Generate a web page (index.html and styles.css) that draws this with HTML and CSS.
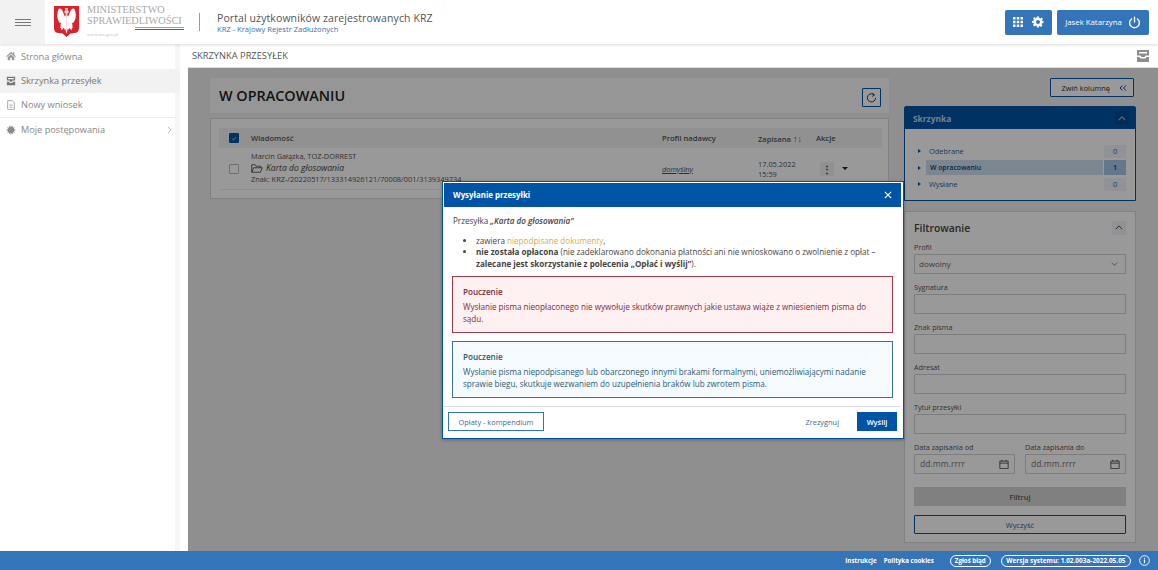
FILE: index.html
```html
<!DOCTYPE html>
<html lang="pl">
<head>
<meta charset="utf-8">
<title>Portal użytkowników zarejestrowanych KRZ</title>
<link rel="stylesheet" href="styles.css">
</head>
<body>
<div class="app">
  <header class="topbar">
    <button class="burger" aria-label="Menu"><span></span><span></span><span></span></button>
    <div class="logo">
      <svg class="shield" viewBox="0 0 28 32" width="27" height="31">
        <path d="M1 0h26v23c0 3-2 5-5 5l-4 .5L14 32l-4-3.500L6 28c-3 0-5-2-5-5z" fill="#d8232a"/>
        <path d="M14 4l1.500.5 1 2-1.500.6-.3 2.400 1 1.400 1.200-3 1.500-3.500 2-2 1.500.5 1.200 2.500.6 4-.4 3.500-1.500 3.500-2.500 2 1.500 1.500-1.200.5 1.200 2-1.500.3.5 2-2-1-1-1.200-.8 2-1-.8-.2 2.500-1 2z" fill="#fff"/>
        <path d="M14 4l-1.500.5-1 2 1.500.6.300 2.400-1 1.400-1.200-3-1.500-3.500-2-2-1.500.5-1.200 2.500-.6 4 .4 3.500 1.500 3.500 2.500 2-1.500 1.500 1.200.5-1.200 2 1.500.3-.5 2 2-1 1-1.200.8 2 1-.8.2 2.500 1 2z" fill="#fff"/>
        <path d="M12.500 2h3v1.800h-3z" fill="#f4d9a0"/>
      </svg>
      <div class="logo-text">
        <div class="logo-line">MINISTERSTWO</div>
        <div class="logo-line">SPRAWIEDLIWOŚCI</div>
        <div class="logo-rule"></div>
        <div class="logo-url">www.ms.gov.pl</div>
      </div>
    </div>
    <div class="brand-sep"></div>
    <div class="brand">
      <div class="brand-title">Portal użytkowników zarejestrowanych KRZ</div>
      <div class="brand-sub">KRZ - Krajowy Rejestr Zadłużonych</div>
    </div>
    <div class="top-actions">
      <div class="top-btn top-btn-icons">
        <svg viewBox="0 0 12 12" width="10" height="10" fill="#fff"><path d="M0 0h3v3H0zM4.500 0h3v3h-3zM9 0h3v3H9zM0 4.500h3v3H0zM4.500 4.500h3v3h-3zM9 4.500h3v3H9zM0 9h3v3H0zM4.500 9h3v3h-3zM9 9h3v3H9z"/></svg>
        <svg viewBox="0 0 24 24" width="12" height="12" fill="#fff"><path fill-rule="evenodd" d="M10 1h4l.6 3.100 1.900.8 2.700-1.800 2.800 2.800-1.800 2.700.8 1.900L23 10v4l-3.100.6-.8 1.900 1.800 2.700-2.800 2.800-2.700-1.800-1.900.8L14 23h-4l-.6-3.100-1.900-.8-2.700 1.800-2.800-2.800 1.800-2.700-.8-1.900L0 14v-4l3.100-.6.8-1.900L2.100 4.800l2.800-2.800 2.700 1.800 1.900-.8zM12 8a4 4 0 1 0 0 8 4 4 0 0 0 0-8z"/></svg>
      </div>
      <div class="top-btn top-btn-user">
        <span>Jasek Katarzyna</span>
        <svg viewBox="0 0 24 24" width="13" height="13" fill="none" stroke="#fff" stroke-width="2.600" stroke-linecap="round"><path d="M12 2v9M6.500 5.500a9 9 0 1 0 11 0"/></svg>
      </div>
    </div>
  </header>

  <div class="shell">
    <aside class="sidebar">
      <nav class="nav">
        <a class="nav-item">
          <svg viewBox="0 0 12 12" width="10" height="10" fill="#9a9a9a"><path d="M6 1 0 6.500l1 .8L6 3l5 4.300 1-.8L10 4.600V1.500H8.500v1.800zM2 7.500V11h3V8h2v3h3V7.500L6 4z"/></svg>
          <span>Strona główna</span>
        </a>
        <a class="nav-item nav-active">
          <svg viewBox="0 0 12 12" width="10" height="10" fill="#777"><path d="M1 1h10v4.500H8L7 7H5L4 5.500H1zM2.500 2.500v1.500h7V2.500zM1 7h2.500l1 1.500h3L8.500 7H11v4H1z"/></svg>
          <span>Skrzynka przesyłek</span>
        </a>
        <a class="nav-item nav-line">
          <svg viewBox="0 0 12 12" width="10" height="10" fill="none" stroke="#9a9a9a"><path d="M2 .7h5.500L10 3.200v8H2zM4 6h4M4 8.500h4"/></svg>
          <span>Nowy wniosek</span>
        </a>
        <a class="nav-item">
          <svg viewBox="0 0 12 12" width="10" height="10" fill="#8a8a8a"><path d="M6 0l.7 2.400L8.500.8l-.3 2.500 2.500-.6-1.400 2.100L12 6l-2.700 1.200 1.400 2.100-2.500-.6.300 2.500-1.800-1.600L6 12l-.7-2.400-1.800 1.600.3-2.500-2.500.6 1.400-2.100L0 6l2.700-1.200-1.400-2.100 2.500.6-.3-2.500 1.800 1.600z"/></svg>
          <span>Moje postępowania</span>
          <svg class="nav-chev" viewBox="0 0 6 10" width="5" height="8" fill="none" stroke="#aaa"><path d="M1 1l4 4-4 4"/></svg>
        </a>
      </nav>
      <div class="side-track"></div>
    </aside>

    <main class="main">
      <div class="crumb">
        <span>SKRZYNKA PRZESYŁEK</span>
        <svg viewBox="0 0 12 12" width="12" height="12" fill="#8d8d8d"><path d="M0 0h12v5.500H8.500L7.500 7h-3l-1-1.500H0zM2 2v1.500h8V2zM0 7h2.500l1 1.500h5L9.500 7H12v5H0z"/></svg>
      </div>
      <div class="stage">
        <div class="cols">
          <section class="left">
            <div class="title-card">
              <h1>W OPRACOWANIU</h1>
              <button class="refresh" aria-label="Odśwież">
                <svg viewBox="0 0 16 16" width="11" height="11" fill="none" stroke="#333" stroke-width="1.400"><path d="M12.500 4.500A6 6 0 1 0 14 8.500M9 1.500l3 3-3 2"/></svg>
              </button>
            </div>
            <div class="table-card">
              <div class="t-head">
                <span class="cb cb-on"><svg viewBox="0 0 10 10" width="9" height="9" fill="none" stroke="#bbb" stroke-width="1.200"><path d="M2.500 5.200l1.800 1.600 3.200-3.600"/></svg></span>
                <span class="c-msg">Wiadomość</span>
                <span class="c-prof">Profil nadawcy</span>
                <span class="c-date">Zapisana <span class="sort">↑↓</span></span>
                <span class="c-act">Akcje</span>
              </div>
              <div class="t-row">
                <span class="cb"></span>
                <div class="c-msg msg">
                  <div>Marcin Gałązka, TOZ-DORREST</div>
                  <div class="msg-title">
                    <svg viewBox="0 0 16 12" width="12" height="9" fill="none" stroke="#444" stroke-width="1.100"><path d="M1 11V1h4.500l1.500 2h6v2M1 11l2.500-6H15l-2.500 6z"/></svg>
                    <em>Karta do głosowania</em>
                  </div>
                  <div>Znak: KRZ-/20220517/133314926121/70008/001/3139349734</div>
                </div>
                <a class="c-prof prof-link">domyślny</a>
                <div class="c-date date-cell">17.05.2022<br>15:59</div>
                <div class="c-act act">
                  <span class="kebab">⋮</span>
                  <span class="caret"></span>
                </div>
              </div>
            </div>
          </section>

          <aside class="right">
            <div class="collapse-row">
              <button class="collapse-btn">Zwiń kolumnę
                <svg viewBox="0 0 8 6" width="8" height="6" fill="none" stroke="#16406e"><path d="M3.500.5L1 3l2.500 2.500M7 .5L4.500 3 7 5.500"/></svg>
              </button>
            </div>
            <div class="box-card">
              <div class="box-head">
                <span>Skrzynka</span>
                <span class="box-toggle"><svg viewBox="0 0 10 6" width="8" height="5" fill="none" stroke="#9db4cc" stroke-width="1.500"><path d="M1 5l4-4 4 4"/></svg></span>
              </div>
              <ul class="box-list">
                <li class="box-row"><span class="tri"></span><span class="box-name">Odebrane</span><span class="count">0</span></li>
                <li class="box-row box-on"><span class="tri"></span><span class="box-name">W opracowaniu</span><span class="count">1</span></li>
                <li class="box-row"><span class="tri"></span><span class="box-name">Wysłane</span><span class="count">0</span></li>
              </ul>
            </div>
            <div class="filter-card">
              <div class="filter-head">
                <span>Filtrowanie</span>
                <span class="filter-toggle"><svg viewBox="0 0 10 6" width="8" height="5" fill="none" stroke="#444" stroke-width="1.200"><path d="M1 5l4-4 4 4"/></svg></span>
              </div>
              <div class="field">
                <label>Profil</label>
                <div class="input select">dowolny<svg viewBox="0 0 10 6" width="7" height="4" fill="none" stroke="#555"><path d="M1 1l4 4 4-4"/></svg></div>
              </div>
              <div class="field"><label>Sygnatura</label><div class="input"></div></div>
              <div class="field"><label>Znak pisma</label><div class="input"></div></div>
              <div class="field"><label>Adresat</label><div class="input"></div></div>
              <div class="field"><label>Tytuł przesyłki</label><div class="input"></div></div>
              <div class="dates">
                <div class="field">
                  <label>Data zapisania od</label>
                  <div class="input date">dd.mm.rrrr<svg viewBox="0 0 12 12" width="10" height="10" fill="none" stroke="#444"><path d="M1 2.500h10v9H1zM1 5h10M3.500 1v2M8.500 1v2"/></svg></div>
                </div>
                <div class="field">
                  <label>Data zapisania do</label>
                  <div class="input date">dd.mm.rrrr<svg viewBox="0 0 12 12" width="10" height="10" fill="none" stroke="#444"><path d="M1 2.500h10v9H1zM1 5h10M3.500 1v2M8.500 1v2"/></svg></div>
                </div>
              </div>
              <button class="btn-filter">Filtruj</button>
              <button class="btn-clear">Wyczyść</button>
            </div>
          </aside>
        </div>
        <div class="overlay"></div>
        <div class="modal">
          <div class="modal-head">
            <span>Wysyłanie przesyłki</span>
            <svg viewBox="0 0 10 10" width="8" height="8" fill="none" stroke="#fff" stroke-width="1.500"><path d="M1 1l8 8M9 1l-8 8"/></svg>
          </div>
          <div class="modal-body">
            <p class="m-lead">Przesyłka <strong><em>„Karta do głosowania”</em></strong></p>
            <ul class="m-list">
              <li>zawiera <span class="warn">niepodpisane dokumenty</span>,</li>
              <li><strong>nie została opłacona</strong> (nie zadeklarowano dokonania płatności ani nie wnioskowano o zwolnienie z opłat – <strong>zalecane jest skorzystanie z polecenia „Opłać i wyślij”</strong>).</li>
            </ul>
            <div class="notice notice-red">
              <h3>Pouczenie</h3>
              <p>Wysłanie pisma nieopłaconego nie wywołuje skutków prawnych jakie ustawa wiąże z wniesieniem pisma do sądu.</p>
            </div>
            <div class="notice notice-blue">
              <h3>Pouczenie</h3>
              <p>Wysłanie pisma niepodpisanego lub obarczonego innymi brakami formalnymi, uniemożliwiającymi nadanie sprawie biegu, skutkuje wezwaniem do uzupełnienia braków lub zwrotem pisma.</p>
            </div>
          </div>
          <div class="modal-foot">
            <button class="btn-fees">Opłaty - kompendium</button>
            <button class="btn-cancel">Zrezygnuj</button>
            <button class="btn-send">Wyślij</button>
          </div>
        </div>
      </div>
    </main>
  </div>

  <footer class="footer">
    <a>Instrukcje</a>
    <a class="f-cookies">Polityka cookies</a>
    <span class="pill pill-short">Zgłoś błąd</span>
    <span class="pill pill-last">Wersja systemu: 1.02.003a-2022.05.05</span>
    <svg viewBox="0 0 12 12" width="11" height="11" fill="none" stroke="#fff"><circle cx="6" cy="6" r="5.300"/><path d="M6 5v4M6 3v1.200" stroke-width="1.300"/></svg>
  </footer>
</div>
</body>
</html>
```
FILE: styles.css
```css
* { box-sizing: border-box; }
html, body { margin: 0; padding: 0; height: 100%; overflow: hidden; }
body { font-family: "Open Sans", "Noto Sans", sans-serif; font-size: 8px; color: #333; background: #fff; }
button { font-family: inherit; cursor: pointer; }
h1, h3, p, ul { margin: 0; padding: 0; }

.app { width: 1158px; height: 570px; display: flex; flex-direction: column; }

/* top bar */
.topbar { height: 44px; flex: none; display: flex; align-items: center; background: #fff; box-shadow: 0 1px 3px rgba(0,0,0,.14); position: relative; z-index: 3; }
.burger { width: 45px; height: 44px; border: 0; background: #f2f2f2; display: flex; flex-direction: column; align-items: center; justify-content: center; gap: 2px; padding: 0; }
.burger span { width: 16px; height: 1px; background: #777; }
.logo { display: flex; align-items: flex-start; margin-left: 8px; width: 131px; height: 44px; gap: 7px; }
.shield { flex: none; margin-top: 6px; }
.logo-text { font-family: "Liberation Serif", serif; color: #aaa; font-size: 10.300px; line-height: 10.500px; padding-top: 5px; white-space: nowrap; }
.logo-rule { height: 3px; margin-top: 1px; border-top: 1px solid #e08085; border-bottom: 1px solid #d8232a; margin-left: 48px; width: 49px; }
.logo-url { font-size: 5px; line-height: 8px; color: #c4c4c4; margin-top: 1px; }
.brand-sep { width: 1px; height: 18px; background: #c98a8f; margin-left: 15px; }
.brand { margin-left: 17px; }
.brand-title { font-size: 10.500px; line-height: 14px; color: #555; letter-spacing: .1px; }
.brand-sub { font-size: 7.600px; line-height: 9px; color: #2f75b5; }
.top-actions { margin-left: auto; margin-right: 9px; display: flex; gap: 5px; }
.top-btn { height: 25px; background: #3474b8; border-radius: 2px; color: #fff; display: flex; align-items: center; justify-content: center; }
.top-btn-icons { width: 47px; gap: 9px; }
.top-btn-user { width: 92px; gap: 6px; font-size: 7.800px; }

/* shell */
.shell { flex: 1; display: flex; min-height: 0; }
.sidebar { width: 188px; flex: none; display: flex; background: #fff; }
.nav { width: 175px; position: relative; }
.side-track { width: 5px; background: #f6f6f6; }
.nav-item { height: 24.500px; display: flex; align-items: center; gap: 5px; padding-left: 6px; color: #888; font-size: 9.200px; position: relative; }
.nav-active { background: #f2f2f2; color: #777; width: 180px; }
.nav-line { border-bottom: 1px solid #ececec; }
.nav-chev { position: absolute; right: 3px; top: 8px; }

.main { flex: 1; display: flex; flex-direction: column; min-width: 0; }
.crumb { height: 23px; flex: none; display: flex; align-items: center; justify-content: space-between; padding: 0 9px 0 4px; font-size: 9.300px; color: #555; }
.stage { flex: 1; position: relative; background: #eee; padding: 10px 22px 0 22px; overflow: hidden; border-top: 1px solid #ddd; }

.cols { display: flex; gap: 15px; align-items: flex-start; }

.left { width: 679px; }
.title-card { height: 35px; background: #fafafa; display: flex; align-items: center; justify-content: space-between; padding: 0 8px 0 9px; }
.title-card h1 { font-size: 14.400px; font-weight: 600; color: #222; line-height: 20px; }
.refresh { width: 19px; height: 19px; border: 1px solid #0054a6; background: #fff; padding: 0; display: flex; align-items: center; justify-content: center; border-radius: 1px; margin-top: 3px; }
.table-card { margin-top: 5px; background: #fff; border: 1px solid #d8d8d8; height: 81px; padding: 9px 0 0 8px; }
.t-head { height: 20px; width: 663px; background: #f2f2f2; display: flex; align-items: center; font-size: 7.600px; font-weight: 600; color: #555; padding-left: 10px; }
.t-row { width: 663px; height: 42px; display: flex; align-items: center; font-size: 7.400px; color: #555; padding-left: 10px; border-bottom: 1px solid #eee; }
.cb { width: 10px; height: 10px; flex: none; border: 1px solid #bbb; background: #fff; display: flex; align-items: center; justify-content: center; border-radius: 1px; }
.cb-on { background: #0054a6; border-color: #0054a6; }
.c-msg { width: 411px; flex: none; margin-left: 12px; }
.c-prof { width: 96px; flex: none; }
.c-date { width: 58px; flex: none; }
.c-act { flex: none; }
.sort { font-size: 9px; }
.msg { line-height: 11.700px; white-space: nowrap; }
.msg-title { display: flex; align-items: center; gap: 3px; font-size: 8.600px; color: #444; }
.prof-link { text-decoration: underline; font-style: italic; color: #36507a; }
.date-cell { line-height: 10px; }
.act { display: flex; align-items: center; gap: 8px; padding-left: 4px; }
.kebab { width: 14px; height: 14px; background: #f2f2f2; text-align: center; font-size: 10px; line-height: 14px; font-weight: 700; color: #333; }
.caret { width: 0; height: 0; border-left: 3px solid transparent; border-right: 3px solid transparent; border-top: 3px solid #222; }

.right { width: 232px; }
.collapse-row { display: flex; justify-content: flex-end; height: 28px; }
.collapse-btn { width: 84px; height: 19px; margin-right: 2px; border: 1px solid #0054a6; background: #fff; color: #333; font-size: 7.400px; padding: 0 6px 0 0; border-radius: 1px; display: flex; align-items: center; justify-content: flex-end; gap: 9px; }
.box-card { border: 1px solid #0054a6; background: #fff; height: 95px; border-radius: 2px 2px 0 0; margin-bottom: 10px; }
.box-head { height: 22px; background: #0054a6; display: flex; align-items: center; justify-content: space-between; padding: 0 6px 0 8px; color: #c8d6e6; font-size: 8.400px; font-weight: 700; }
.box-toggle { width: 14px; height: 14px; background: #004a94; display: flex; align-items: center; justify-content: center; }
.box-list { list-style: none; padding: 14px 9px 0 13px; }
.box-row { height: 16.500px; display: flex; align-items: center; color: #2f5f96; font-size: 7.400px; }
.tri { width: 0; height: 0; border-left: 3px solid #0054a6; border-top: 2px solid transparent; border-bottom: 2px solid transparent; margin-right: 5px; flex: none; }
.box-name { flex: 1; height: 14px; line-height: 14px; padding-left: 3px; }
.count { width: 22px; height: 13px; line-height: 13px; text-align: center; background: #f0f4f8; flex: none; }
.box-on { font-weight: 600; color: #0a3f7a; }
.box-on .box-name { background: #cfe0f2; height: 15px; line-height: 15px; margin-right: 1px; font-size: 6.800px; padding-left: 4px; }
.box-on .count { background: #a9c8e8; height: 15px; line-height: 15px; }

.filter-card { background: #fff; border: 1px solid #d8d8d8; height: 332px; padding: 0 9px; }
.filter-head { height: 29px; display: flex; align-items: center; justify-content: space-between; font-size: 10.400px; font-weight: 600; color: #444; padding-top: 2px; }
.filter-toggle { width: 14px; height: 14px; background: #f0f4f8; display: flex; align-items: center; justify-content: center; }
.field { display: flex; flex-direction: column; margin-bottom: 7.500px; }
.field label { font-size: 7.200px; line-height: 12px; height: 13px; color: #555; }
.input { height: 19.500px; border: 1px solid #d0d0d0; background: #fff; border-radius: 1px; }
.select { display: flex; align-items: center; justify-content: space-between; padding: 0 7px 0 4px; font-size: 8px; color: #666; }
.date { display: flex; align-items: center; justify-content: space-between; padding: 0 5px; font-size: 8.600px; color: #777; }
.dates { display: grid; grid-template-columns: 101px 101px; gap: 10px; }
.btn-filter { display: block; width: 100%; height: 19px; border: 0; background: #d6d6d6; color: #555; font-size: 7.400px; font-weight: 600; margin-top: 6px; padding: 0; }
.btn-clear { display: block; width: 100%; height: 19px; border: 1px solid #0054a6; background: #fff; color: #2f5f96; font-size: 7.400px; margin-top: 9px; padding: 0; border-radius: 1px; }

/* overlay + modal */
.overlay { position: absolute; inset: 0; background: rgba(0,0,0,.4); }
.modal { position: absolute; left: 254px; top: 113px; width: 462px; height: 258px; background: #fff; border: 1px solid #0054a6; box-shadow: 0 1px 3px rgba(0,0,0,.3); padding: 1px 2px 0 1px; }
.modal-head { height: 24px; background: #0054a6; color: #fff; font-size: 7.900px; font-weight: 700; display: flex; align-items: center; justify-content: space-between; padding: 0 9px; }
.modal-body { padding: 8px 8px 0 8px; font-size: 8.100px; line-height: 11px; color: #444; height: 200px; border-bottom: 1px solid #ddd; }
.m-lead { margin-bottom: 8px; line-height: 12px; padding-left: 1px; }
.m-lead strong { font-weight: 600; }
.m-list { padding-left: 24px; margin-bottom: 7px; line-height: 11.400px; }
.warn { color: #e0a94a; }
.notice { border: 1px solid; height: 57px; padding: 9px 10px 0 10px; margin-bottom: 8px; }
.notice h3 { font-size: 8.100px; font-weight: 600; line-height: 12px; margin-bottom: 3px; }
.notice p { line-height: 11.500px; }
.notice-red { background: #fff0f1; border-color: #a33d4b; color: #7a2f3a; }
.notice-blue { background: #f4fafe; border-color: #3a7199; color: #2d5a75; }
.modal-foot { height: 29px; display: flex; align-items: center; padding: 0 4px; font-size: 7.400px; }
.btn-fees { width: 96px; height: 19px; border: 1px solid #3474b8; background: #fff; color: #3e6a9b; font-size: 7.400px; padding: 0; margin-right: auto; }
.btn-cancel { border: 0; background: none; color: #3e6a9b; font-size: 7.400px; margin-right: 14px; padding: 0 4px; }
.btn-send { width: 40px; height: 19px; border: 0; background: #0054a6; color: #fff; font-size: 7.400px; font-weight: 600; padding: 0; }

/* footer */
.footer { height: 19px; flex: none; background: #3474b8; display: flex; align-items: center; justify-content: flex-end; color: #fff; font-size: 6.200px; font-weight: 700; padding-right: 8px; }
.f-cookies { margin-left: 7px; margin-right: 16px; }
.pill { border: 1px solid #fff; border-radius: 7px; height: 12px; line-height: 10px; padding: 0 4px; margin-right: 10px; white-space: nowrap; font-size: 6.450px; }
.pill-short { font-size: 6.200px; }
.pill-last { margin-right: 8px; padding: 0 4.500px; }
```
